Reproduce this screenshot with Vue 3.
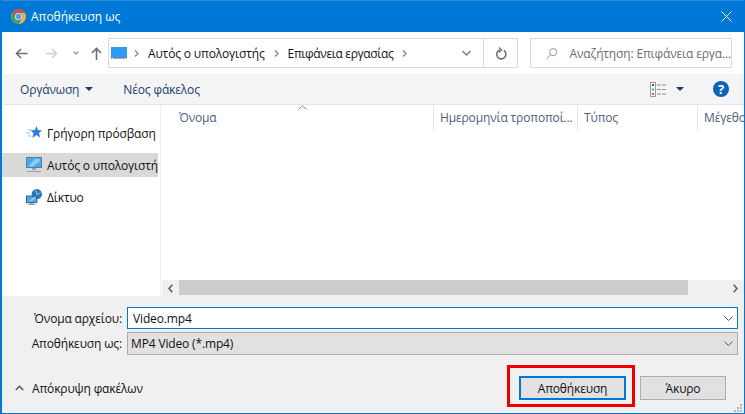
<template>
  <div class="dialog">
    <div class="titlebar">
      <svg class="chrome" width="15" height="15" viewBox="0 0 16 16">
        <path d="M8 0a8 8 0 0 1 6.9 4H8a4 4 0 0 0-3.8 2.8L1.6 3A8 8 0 0 1 8 0z" fill="#d8503f" />
        <path d="M14.9 4A8 8 0 0 1 8 16l3.4-6A4 4 0 0 0 11.2 5.3 4 4 0 0 0 8 4z" fill="#f2b33d" />
        <path d="M8 16A8 8 0 0 1 1.6 3l3.4 6.6A4 4 0 0 0 9.2 11.8z" fill="#46a35e" />
        <circle cx="8" cy="8" r="3.8" fill="#e6eef6" />
        <circle cx="8" cy="8" r="2.9" fill="#5b9be6" />
      </svg>
      <span class="title">Αποθήκευση ως</span>
      <svg class="close" width="11" height="11" viewBox="0 0 11 11">
        <path d="M.5.5l10 10M10.5.5l-10 10" stroke="#fff" stroke-width="1" fill="none" />
      </svg>
    </div>

    <div class="nav">
      <div class="nav-buttons">
        <svg width="13" height="11" viewBox="0 0 13 11"><path d="M12.5 5.5H1.5M6 1L1.5 5.5 6 10" stroke="#6f6f6f" stroke-width="1.6" fill="none" /></svg>
        <svg class="fwd" width="13" height="11" viewBox="0 0 13 11"><path d="M.5 5.5h11M7 1l4.5 4.5L7 10" stroke="#d0d0d0" stroke-width="1.6" fill="none" /></svg>
        <svg class="drop" width="6" height="4" viewBox="0 0 6 4"><path d="M.5.5L3 3 5.5.5" stroke="#9a9a9a" stroke-width="1.3" fill="none" /></svg>
        <svg class="up" width="11" height="13" viewBox="0 0 11 13"><path d="M5.5 13V1.5M1 6l4.5-4.5L10 6" stroke="#6f6f6f" stroke-width="1.6" fill="none" /></svg>
      </div>
      <div class="address">
        <svg class="pc-small" width="16" height="12" viewBox="0 0 16 12">
          <rect width="16" height="10.5" fill="#2f9bf0" />
          <rect y="10.5" width="16" height="1" fill="#155a96" />
          <rect x="1" y="11" width="1" height="1" fill="#fff" />
          <rect x="14" y="11" width="1" height="1" fill="#fff" />
        </svg>
        <svg class="crumb first" width="5" height="7" viewBox="0 0 5 7"><path d="M1 .5L4 3.5 1 6.5" stroke="#8a8a8a" stroke-width="1.4" fill="none" /></svg>
        <span>Αυτός ο υπολογιστής</span>
        <svg class="crumb" width="5" height="7" viewBox="0 0 5 7"><path d="M1 .5L4 3.5 1 6.5" stroke="#8a8a8a" stroke-width="1.4" fill="none" /></svg>
        <span class="crumb-desktop">Επιφάνεια εργασίας</span>
        <svg class="crumb" width="5" height="7" viewBox="0 0 5 7"><path d="M1 .5L4 3.5 1 6.5" stroke="#8a8a8a" stroke-width="1.4" fill="none" /></svg>
        <svg class="addr-drop" width="9" height="6" viewBox="0 0 9 6"><path d="M.5 1L4.5 5 8.5 1" stroke="#7d7d7d" stroke-width="1.4" fill="none" /></svg>
        <div class="refresh">
          <svg width="12" height="13" viewBox="0 0 12 13"><path d="M8.8 3.4A4.6 4.6 0 1 1 4.6 3" stroke="#6f6f6f" stroke-width="1.6" fill="none" /><path d="M4 .6l2.6 2.4L4 5.4" stroke="#6f6f6f" stroke-width="1.3" fill="none" /></svg>
        </div>
      </div>
      <div class="search">
        <svg width="13" height="13" viewBox="0 0 13 13"><circle cx="8" cy="5" r="4" stroke="#8a8a8a" fill="none" /><path d="M5 8L.7 12.3" stroke="#c9b98a" stroke-width="1.3" /></svg>
        <span>Αναζήτηση: Επιφάνεια εργα...</span>
      </div>
    </div>

    <div class="toolbar">
      <span class="tool">Οργάνωση</span>
      <span class="caret"></span>
      <span class="tool new-folder">Νέος φάκελος</span>
      <svg class="views" width="16" height="15" viewBox="0 0 16 15">
        <rect x=".5" y=".5" width="5" height="14" fill="#fff" stroke="#9a9a9a" />
        <rect x="2" y="2" width="2" height="2" fill="#555" />
        <rect x="2" y="6.5" width="2" height="2" fill="#3f9bd8" />
        <rect x="2" y="11" width="2" height="2" fill="#d9534a" />
        <path d="M7 3h4M12 3h4M7 7.5h4M12 7.5h4M7 12h4M12 12h4" stroke="#8f8f8f" />
      </svg>
      <span class="caret view-caret"></span>
      <span class="help">?</span>
    </div>

    <div class="content">
      <div class="sidebar">
        <div class="side-row">
          <svg width="16" height="16" viewBox="0 0 16 16">
            <path d="M10.5 1l1.5 4 4 .3-3 2.800 1 4.400-3.600-2.400L6.500 13l1-4.800-3-3 4.400-.2z" fill="#2b80dc" />
            <path d="M2 5h4M0 8h4M2 11h3" stroke="#8fc8f2" />
          </svg>
          <span>Γρήγορη πρόσβαση</span>
        </div>
        <div class="side-row selected">
          <svg width="16" height="16" viewBox="0 0 16 16">
            <rect x=".5" y=".5" width="15" height="10" fill="#4aa8ee" stroke="#5d7f9b" />
            <path d="M2 9.500L9 2h5v2L7 9.500z" fill="#8ccbf4" />
            <rect x="6" y="11" width="4" height="2" fill="#9aa3aa" />
            <rect x="1" y="14" width="14" height="1" fill="#9aa3aa" />
          </svg>
          <span>Αυτός ο υπολογιστή</span>
        </div>
        <div class="side-row">
          <svg width="16" height="16" viewBox="0 0 17 17">
            <circle cx="11.500" cy="5.500" r="5.500" fill="#2f74b5" />
            <path d="M9 1c2 1 3 3 2.500 5.500L15.500 4" stroke="#9ccdf0" fill="none" />
            <rect x=".5" y="7.500" width="11" height="7" fill="#4aa8ee" stroke="#2f5f8a" />
            <path d="M3 13l5-4h2v1l-4 3z" fill="#8ccbf4" />
            <rect x="4" y="15" width="4" height="1" fill="#8e989f" />
            <rect x="2" y="16" width="8" height="1" fill="#8e989f" />
          </svg>
          <span>Δίκτυο</span>
        </div>
      </div>
      <div class="main">
        <div class="columns">
          <svg class="sort" width="9" height="5" viewBox="0 0 9 5"><path d="M.5 4.500L4.500.8 8.500 4.500" stroke="#8a8a8a" fill="none" /></svg>
          <div class="col col-name">Όνομα</div>
          <div class="col col-date">Ημερομηνία τροποποί...</div>
          <div class="col col-type">Τύπος</div>
          <div class="col col-size">Μέγεθος</div>
        </div>
        <div class="list"></div>
        <div class="hscroll">
          <svg class="arrow-btn" width="5" height="9" viewBox="0 0 5 9"><path d="M4.300.8L1 4.500l3.300 3.700" stroke="#5f5f5f" stroke-width="1.600" fill="none" /></svg>
          <div class="thumb"></div>
          <svg class="arrow-btn right" width="5" height="9" viewBox="0 0 5 9"><path d="M.7.8L4 4.500.7 8.200" stroke="#5f5f5f" stroke-width="1.600" fill="none" /></svg>
        </div>
      </div>
    </div>

    <div class="bottom">
      <div class="form">
        <label>Όνομα αρχείου:</label>
        <div class="field name-field">
          <span>Video.mp4</span>
          <svg width="9" height="5" viewBox="0 0 9 5"><path d="M.5.5l4 4 4-4" stroke="#555" fill="none" /></svg>
        </div>
        <label>Αποθήκευση ως:</label>
        <div class="field type-field">
          <span>MP4 Video (*.mp4)</span>
          <svg width="9" height="5" viewBox="0 0 9 5"><path d="M.5.5l4 4 4-4" stroke="#555" fill="none" /></svg>
        </div>
      </div>
      <div class="footer">
        <svg class="hide-chev" width="9" height="6" viewBox="0 0 9 6"><path d="M.8 5L4.500 1.300 8.200 5" stroke="#555" stroke-width="1.500" fill="none" /></svg>
        <span class="hide-text">Απόκρυψη φακέλων</span>
        <button class="btn save">Αποθήκευση</button>
        <button class="btn cancel">Άκυρο</button>
      </div>
      <svg class="grip" width="8" height="8" viewBox="0 0 8 8">
        <path d="M6 0h2v2H6zM3 3h2v2H3zM6 3h2v2H6zM0 6h2v2H0zM3 6h2v2H3zM6 6h2v2H6z" fill="#b5b5b5" />
      </svg>
    </div>
  </div>
</template>

<script setup>
</script>

<style>
html, body { margin: 0; background: #fff; }
</style>

<style scoped>
.dialog {
  width: 745px;
  height: 414px;
  box-sizing: border-box;
  border: solid #0078d7;
  border-width: 0 1px 1px 2px;
  display: flex;
  flex-direction: column;
  background: #fff;
  font-family: "Open Sans", "Noto Sans", sans-serif;
  font-size: 12px;
  letter-spacing: -0.15px;
  color: #111;
  overflow: hidden;
}
.titlebar {
  height: 32px;
  flex: none;
  margin-left: -2px;
  margin-right: -1px;
  box-sizing: border-box;
  border-top: 1px solid #2a8ddf;
  background: #0078d7;
  color: #fff;
  display: flex;
  align-items: center;
  padding: 0 13px 0 11px;
}
.title { margin-left: 5px; letter-spacing: 0; }
.close { margin-left: auto; }
.nav {
  height: 42px;
  flex: none;
  display: flex;
  align-items: center;
}
.nav-buttons { width: 106px; flex: none; display: flex; align-items: center; padding-left: 13px; box-sizing: border-box; }
.fwd { margin-left: 17px; }
.drop { margin-left: 15px; }
.up { margin-left: 12px; }
.address {
  width: 410px;
  height: 30px;
  flex: none;
  box-sizing: border-box;
  border: 1px solid #d9d9d9;
  display: flex;
  align-items: center;
  padding-left: 2px;
  white-space: nowrap;
}
.crumb { margin: 0 9px; }
.crumb.first { margin: 0 9px 0 7px; }
.crumb-desktop { letter-spacing: -0.35px; }
.addr-drop { margin-left: auto; margin-right: 12px; }
.refresh {
  width: 33px;
  height: 100%;
  flex: none;
  border-left: 1px solid #d9d9d9;
  display: flex;
  align-items: center;
  justify-content: center;
}
.search {
  width: 202px;
  height: 30px;
  flex: none;
  margin-left: 12px;
  box-sizing: border-box;
  border: 1px solid #d9d9d9;
  display: flex;
  align-items: center;
  gap: 12px;
  padding-left: 15px;
  color: #6d6d6d;
  white-space: nowrap;
}
.toolbar {
  height: 30px;
  flex: none;
  background: #f3f4f6;
  display: flex;
  align-items: center;
  padding-left: 18px;
  color: #1c3c66;
}
.caret {
  width: 0;
  height: 0;
  margin-left: 6px;
  border: solid transparent;
  border-width: 4px 4px 0;
  border-top-color: #1c3c66;
}
.new-folder { margin-left: 30px; }
.views { margin-left: auto; }
.view-caret { margin-left: 10px; }
.help {
  width: 16px;
  height: 16px;
  margin: 0 15px 0 29px;
  border-radius: 50%;
  background: #0f62b5;
  color: #fff;
  font: bold 13px/16px "Open Sans", sans-serif;
  text-align: center;
}
.content {
  flex: 1;
  min-height: 0;
  display: flex;
  border-top: 1px solid #e5e5e5;
}
.sidebar {
  width: 156px;
  flex: none;
  padding: 16px 2px 0 0;
  border-right: 1px solid #f0f0f0;
  overflow: hidden;
}
.side-row {
  height: 24px;
  display: flex;
  align-items: center;
  gap: 5px;
  padding-left: 24px;
  white-space: nowrap;
  overflow: hidden;
}
.side-row + .side-row { margin-top: 8px; }
.side-row.selected { background: #d9d9d9; }
.main {
  flex: 1;
  min-width: 0;
  display: flex;
  flex-direction: column;
  padding-left: 1px;
}
.columns {
  position: relative;
  height: 25px;
  flex: none;
  display: flex;
  color: #4c607a;
  white-space: nowrap;
  overflow: hidden;
}
.sort { position: absolute; left: 136px; top: 0; }
.col {
  height: 100%;
  flex: none;
  box-sizing: border-box;
  border-right: 1px solid #e5e5e5;
  padding-left: 6px;
  line-height: 25px;
}
.col-name { width: 272px; padding-left: 17px; }
.col-date { width: 144px; }
.col-type { width: 120px; }
.col-size { flex: 1; border-right: 0; }
.list { flex: 1; }
.hscroll {
  height: 16px;
  flex: none;
  background: #f0f0f0;
  display: flex;
  align-items: center;
}
.arrow-btn { width: 5px; margin-left: 6px; flex: none; }
.thumb {
  width: 509px;
  height: 15px;
  margin-left: 6px;
  background: #cdcdcd;
  align-self: flex-start;
}
.arrow-btn.right { margin-left: auto; margin-right: 6px; }
.bottom {
  position: relative;
  height: 117px;
  flex: none;
  background: #f0f0f0;
  padding-top: 11px;
  box-sizing: border-box;
}
.form {
  display: grid;
  grid-template-columns: 120px 611px;
  column-gap: 5px;
  row-gap: 3px;
  align-items: center;
}
.form label { text-align: right; white-space: nowrap; }
.field {
  height: 22px;
  box-sizing: border-box;
  display: flex;
  align-items: center;
  justify-content: space-between;
  padding-right: 4px;
}
.name-field { background: #fff; border: 1px solid #0078d7; padding-left: 5px; }
.type-field { background: #e1e1e1; border: 1px solid #adadad; padding-left: 3px; height: 23px; }
.footer {
  display: flex;
  align-items: center;
  margin-top: 21px;
  padding-left: 13px;
}
.hide-text { margin-left: 8px; }
.btn {
  height: 24px;
  box-sizing: border-box;
  background: #e1e1e1;
  font: inherit;
  letter-spacing: inherit;
  color: #111;
  padding: 0;
}
.save {
  position: relative;
  width: 107px;
  margin-left: auto;
  border: 2px solid #0078d7;
}
.save::after {
  content: "";
  position: absolute;
  inset: -13px -11px -9px -14px;
  border: 3px solid #ee0000;
}
.cancel {
  width: 86px;
  margin-left: 14px;
  margin-right: 18px;
  border: 1px solid #adadad;
}
.grip { position: absolute; right: 2px; bottom: 1px; }
</style>
